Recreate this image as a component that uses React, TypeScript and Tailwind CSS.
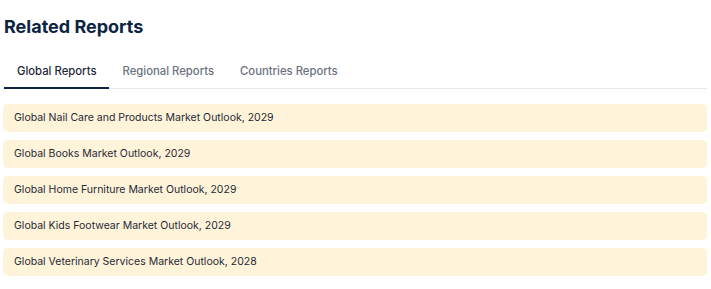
import React from "react";

const reports = [
  "Global Nail Care and Products Market Outlook, 2029",
  "Global Books Market Outlook, 2029",
  "Global Home Furniture Market Outlook, 2029",
  "Global Kids Footwear Market Outlook, 2029",
  "Global Veterinary Services Market Outlook, 2028",
];

export default function App() {
  return (
    <div
      className="w-[711px] h-[289px] bg-white pl-[3px] pr-[4px] pt-[15px]"
      style={{ fontFamily: "Inter, 'Noto Sans', sans-serif" }}
    >
      <h2 className="text-[18px] leading-[24px] font-bold text-[#0d2440] pl-[1px]">Related Reports</h2>
      <div className="mt-[22px] flex border-b border-[#e5e7eb] pl-[1px]">
        <div className="px-[13px] pb-[7px] pt-[1px] text-[11.3px] leading-[18px] font-medium text-[#1f2937] border-b-2 border-[#0d2440] -mb-px">
          Global Reports
        </div>
        <div className="px-[13px] pb-[7px] pt-[1px] text-[11.3px] leading-[18px] font-medium text-[#6b7280]">
          Regional Reports
        </div>
        <div className="px-[13px] pb-[7px] pt-[1px] text-[11.3px] leading-[18px] font-medium text-[#6b7280]">
          Countries Reports
        </div>
      </div>
      <div className="mt-[15px] flex flex-col gap-[8px]">
        {reports.map((r) => (
          <div
            key={r}
            className="h-[28px] flex items-center rounded-[5px] bg-[#fff4d9] px-[11px] text-[10.5px] text-[#1f2937]"
          >
            {r}
          </div>
        ))}
      </div>
    </div>
  );
}
